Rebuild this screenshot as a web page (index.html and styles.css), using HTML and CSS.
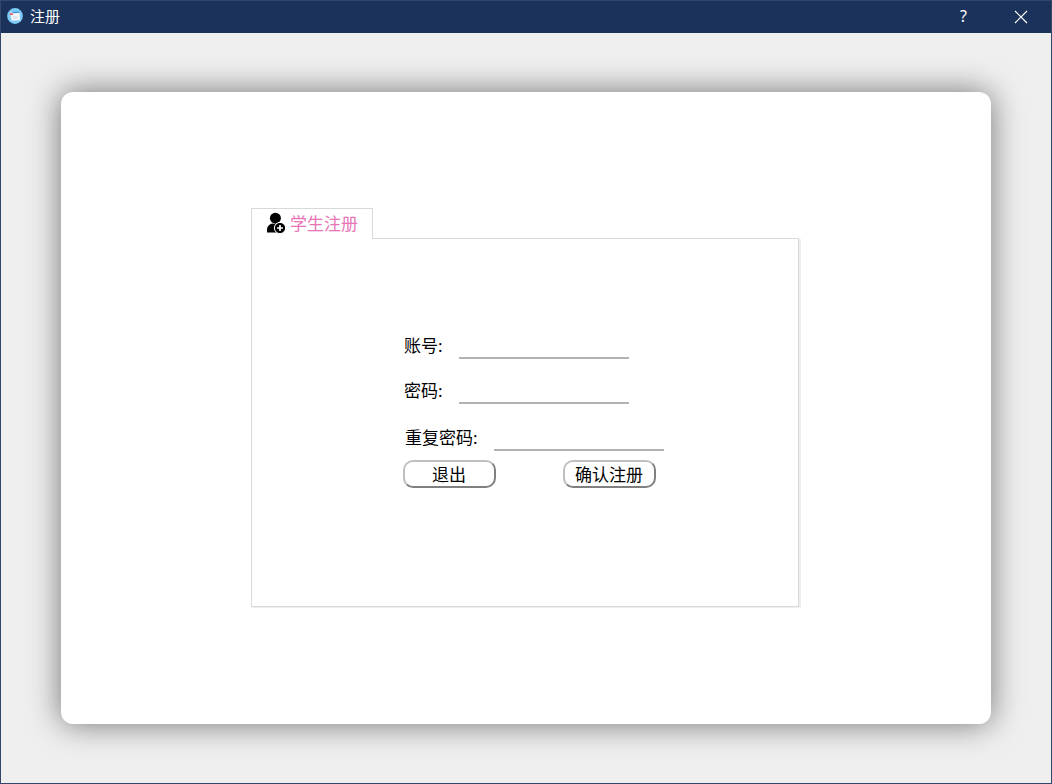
FILE: index.html
```html
<!DOCTYPE html>
<html lang="zh-CN">
<head>
<meta charset="utf-8">
<title>注册</title>
<link rel="stylesheet" href="styles.css">
</head>
<body>
<div class="window">
  <header class="titlebar">
    <svg class="app-icon" width="16" height="16" viewBox="0 0 16 16">
      <circle cx="8" cy="8" r="7.9" fill="#7ccbf8"/>
      <path d="M3 4.6 12.6 3.8 13 12.2 4.6 12.8Z" fill="#f1f5f8"/>
      <path d="M5.6 3.9 12.6 3.4 12.7 4.7 5.7 5.2Z" fill="#2f93dc"/>
      <path d="M2.8 5.2h3.2v1.8H2.8z" fill="#e8646c"/>
      <path d="M6 8.2h4.5v2.5H6z" fill="#dce6ee"/>
    </svg>
    <span class="title">注册</span>
    <span class="help">?</span>
    <svg class="close" width="14" height="14" viewBox="0 0 14 14"><path d="M1 1 13 13M13 1 1 13" stroke="#fff" stroke-width="1.2"/></svg>
  </header>
  <main class="card">
    <section class="tabs">
      <div class="tab">
        <svg class="tab-icon" width="20" height="22" viewBox="0 0 20 22">
          <circle cx="9.4" cy="6.2" r="5.5"/>
          <path d="M1 20.6V18.6C1 14.4 3.2 12.3 6.4 11.6 8.4 12.5 10.4 12.5 12.4 11.6H14V20.6Z"/>
          <circle cx="14" cy="16" r="5.6" stroke="#fff" stroke-width="1"/>
          <path d="M14 13V19M11 16H17" stroke="#fff" stroke-width="1.7"/>
        </svg>
        <span>学生注册</span>
      </div>
      <form class="panel">
        <label class="row"><span class="label">账号:</span><input class="field" type="text"></label>
        <label class="row"><span class="label">密码:</span><input class="field" type="password"></label>
        <label class="row row-repeat"><span class="label label-wide">重复密码:</span><input class="field" type="password"></label>
        <div class="actions">
          <button class="button" type="button">退出</button>
          <button class="button" type="button">确认注册</button>
        </div>
      </form>
    </section>
  </main>
</div>
</body>
</html>
```
FILE: styles.css
```css
* { box-sizing: border-box; }
body {
  margin: 0;
  font-family: "Noto Sans", "Noto Sans CJK SC", sans-serif;
}
.window {
  width: 1052px;
  height: 784px;
  border: 1px solid #34466a;
  background: #efefef;
  overflow: hidden;
}
.titlebar {
  display: flex;
  align-items: center;
  height: 32px;
  padding: 0 23px 0 6px;
  background: #1b325b;
  color: #fff;
  font-size: 15px;
}
.app-icon { margin-top: -2px; }
.title { margin: -2px 0 0 7px; line-height: 30px; }
.help { margin: -3px 0 0 auto; font-size: 16px; line-height: 30px; }
.close { margin-left: 47px; }
.card {
  width: 930px;
  height: 632px;
  margin: 59px 0 0 60px;
  padding: 116px 0 0 190px;
  border-radius: 12px;
  background: #fff;
  box-shadow: 0 0 32px rgba(0, 0, 0, 0.52);
}
.tab {
  display: flex;
  align-items: center;
  position: relative;
  z-index: 1;
  width: 122px;
  height: 31px;
  padding-left: 14px;
  border: 1px solid #d9d9d9;
  border-bottom: 0;
  background: #fff;
  color: #e775b6;
  font-size: 17px;
}
.tab-icon { margin-top: -3px; }
.tab span { margin-left: 4px; line-height: 28px; }
.panel {
  width: 548px;
  height: 369px;
  margin-top: -1px;
  padding: 90px 0 0 151px;
  border: 1px solid #d9d9d9;
  box-shadow: 1px 1px 0 #efefef, 2px 1px 0 #efefef;
}
.row {
  display: flex;
  align-items: center;
  width: max-content;
  height: 30px;
  margin-bottom: 15px;
}
.row-repeat { margin: 17px 0 0 1px; }
.label {
  width: 56px;
  padding: 4px 0 0 1px;
  font-size: 17px;
  line-height: 24px;
  white-space: nowrap;
}
.label-wide { width: 90px; }
.field {
  width: 170px;
  height: 30px;
  padding: 0;
  border: 0;
  border-bottom: 2px solid #b2b2b2;
  background: transparent;
  font: inherit;
  outline: 0;
}
.actions {
  display: flex;
  gap: 67px;
  margin-top: 9px;
}
.button {
  width: 93px;
  height: 28px;
  padding: 2px 1px 0 0;
  border: 2px solid;
  border-color: #bfbfbf #808080 #808080 #bfbfbf;
  border-radius: 10px;
  background: #fff;
  color: #000;
  font-family: inherit;
  font-size: 17px;
  line-height: 22px;
}
```
